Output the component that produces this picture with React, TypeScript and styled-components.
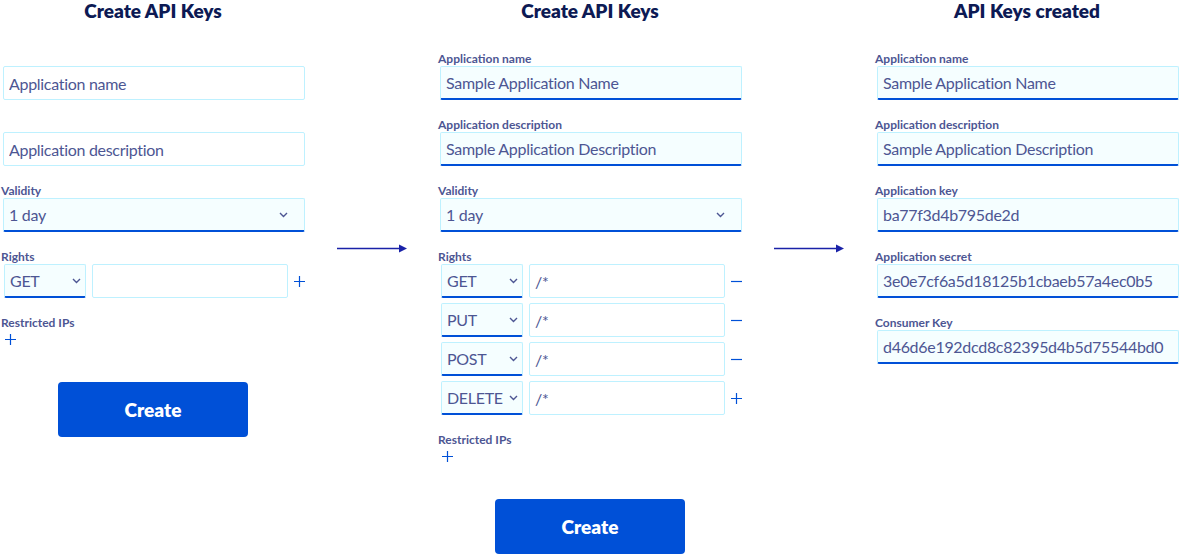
import React from "react";
import styled, { createGlobalStyle } from "styled-components";

const Global = createGlobalStyle`
  html, body { margin: 0; padding: 0; background: #ffffff; }
  body { font-family: Lato, "Liberation Sans", sans-serif; }
  * { box-sizing: border-box; }
`;

const TEXT = "#4d5693";
const BLUE = "#0050d7";
const BORDER = "#bef1ff";
const FILL = "#f5feff";

const Page = styled.div`
  display: flex;
  align-items: flex-start;
  padding-left: 1px;
  width: 1180px;
  height: 555px;
  overflow: hidden;
`;

const Column = styled.section`
  width: 304px;
  display: flex;
  flex-direction: column;
  flex-shrink: 0;
`;

const Title = styled.h2`
  margin: 0;
  height: 52px;
  font-size: 19px;
  line-height: 22px;
  font-weight: 800;
  text-align: center;
  color: #0d1a54;
`;

const Field = styled.div`
  display: flex;
  flex-direction: column;
  margin-bottom: 18px;
`;

const Label = styled.label`
  display: block;
  height: 14px;
  font-size: 12px;
  line-height: 14px;
  font-weight: 700;
  color: ${TEXT};
  white-space: nowrap;
`;

const TextInput = styled.input<{ $filled?: boolean }>`
  display: block;
  width: 302px;
  height: 34px;
  margin: 0 0 0 2px;
  padding: 0 5px;
  border: 1px solid ${BORDER};
  border-bottom: ${(p) => (p.$filled ? `2px solid ${BLUE}` : `1px solid ${BORDER}`)};
  border-radius: 2px;
  background: ${(p) => (p.$filled ? FILL : "#ffffff")};
  font-family: inherit;
  font-size: 16px;
  letter-spacing: -0.3px;
  color: ${TEXT};
  outline: none;
  &::placeholder { color: ${TEXT}; opacity: 1; }
`;

const SelectBox = styled.div<{ $width: number; $offset: number; $padRight: number }>`
  display: flex;
  align-items: center;
  justify-content: space-between;
  width: ${(p) => p.$width}px;
  height: 34px;
  margin-left: ${(p) => p.$offset}px;
  padding: 0 ${(p) => p.$padRight}px 0 5px;
  border: 1px solid ${BORDER};
  border-bottom: 2px solid ${BLUE};
  border-radius: 2px;
  background: ${FILL};
  font-size: 16px;
  letter-spacing: -0.3px;
  color: ${TEXT};
  flex-shrink: 0;
  white-space: nowrap;
`;

const RightsList = styled.div`
  display: flex;
  flex-direction: column;
  gap: 5px;
  margin-bottom: 18px;
`;

const RightsRow = styled.div`
  display: flex;
  align-items: center;
  height: 34px;
`;

const PathInput = styled(TextInput)`
  width: 196px;
  margin-left: 6px;
  flex-shrink: 0;
`;

const IconButton = styled.button<{ $offset: number }>`
  display: flex;
  align-items: center;
  justify-content: center;
  width: 11px;
  height: 18px;
  margin-left: ${(p) => p.$offset}px;
  padding: 0;
  border: none;
  background: transparent;
  color: ${BLUE};
  cursor: pointer;
`;

const CreateButton = styled.button`
  display: block;
  width: 190px;
  height: 55px;
  margin: 34px auto 0;
  border: none;
  border-radius: 4px;
  background: ${BLUE};
  color: #ffffff;
  font-family: inherit;
  font-size: 19px;
  font-weight: 800;
  cursor: pointer;
`;

const ArrowCell = styled.div<{ $width: number }>`
  width: ${(p) => p.$width}px;
  display: flex;
  justify-content: center;
  padding-top: 244px;
  flex-shrink: 0;
`;

const Chevron = () => (
  <svg width="9" height="6" viewBox="0 0 9 6" fill="none">
    <path d="M1 1l3.5 3.5L8 1" stroke={TEXT} strokeWidth="1.4" />
  </svg>
);

const Plus = () => (
  <svg width="11" height="11" viewBox="0 0 11 11">
    <path d="M0 5.5h11M5.5 0v11" stroke={BLUE} strokeWidth="1.2" />
  </svg>
);

const Minus = () => (
  <svg width="11" height="11" viewBox="0 0 11 11">
    <path d="M0 5.5h11" stroke={BLUE} strokeWidth="1.2" />
  </svg>
);

const Arrow = () => (
  <svg width="70" height="9" viewBox="0 0 70 9">
    <path d="M0 4.5h63" stroke="#1a22a8" strokeWidth="1.3" />
    <path d="M62 0.5L70 4.5L62 8.5Z" fill="#1a22a8" />
  </svg>
);

type Right = { method: string; path: string; last?: boolean };

const Rights = ({ rows }: { rows: Right[] }) => (
  <>
    <Label>Rights</Label>
    <RightsList>
      {rows.map((r, i) => (
        <RightsRow key={i}>
          <SelectBox $width={82} $offset={3} $padRight={4}>
            <span>{r.method}</span>
            <Chevron />
          </SelectBox>
          <PathInput defaultValue={r.path} />
          <IconButton $offset={6}>{r.last ? <Plus /> : <Minus />}</IconButton>
        </RightsRow>
      ))}
    </RightsList>
  </>
);

const Restricted = () => (
  <>
    <Label>Restricted IPs</Label>
    <IconButton $offset={4}>
      <Plus />
    </IconButton>
    <CreateButton>Create</CreateButton>
  </>
);

const Validity = () => (
  <Field>
    <Label>Validity</Label>
    <SelectBox $width={302} $offset={2} $padRight={16}>
      <span>1 day</span>
      <Chevron />
    </SelectBox>
  </Field>
);

export default function App() {
  return (
    <>
      <Global />
      <Page>
        <Column>
          <Title>Create API Keys</Title>
          <Field>
            <Label />
            <TextInput placeholder="Application name" />
          </Field>
          <Field>
            <Label />
            <TextInput placeholder="Application description" />
          </Field>
          <Validity />
          <Rights rows={[{ method: "GET", path: "", last: true }]} />
          <Restricted />
        </Column>

        <ArrowCell $width={133}>
          <Arrow />
        </ArrowCell>

        <Column>
          <Title>Create API Keys</Title>
          <Field>
            <Label>Application name</Label>
            <TextInput $filled defaultValue="Sample Application Name" />
          </Field>
          <Field>
            <Label>Application description</Label>
            <TextInput $filled defaultValue="Sample Application Description" />
          </Field>
          <Validity />
          <Rights
            rows={[
              { method: "GET", path: "/*" },
              { method: "PUT", path: "/*" },
              { method: "POST", path: "/*" },
              { method: "DELETE", path: "/*", last: true },
            ]}
          />
          <Restricted />
        </Column>

        <ArrowCell $width={133}>
          <Arrow />
        </ArrowCell>

        <Column>
          <Title>API Keys created</Title>
          {[
            ["Application name", "Sample Application Name"],
            ["Application description", "Sample Application Description"],
            ["Application key", "ba77f3d4b795de2d"],
            ["Application secret", "3e0e7cf6a5d18125b1cbaeb57a4ec0b5"],
            ["Consumer Key", "d46d6e192dcd8c82395d4b5d75544bd0"],
          ].map(([l, v]) => (
            <Field key={l}>
              <Label>{l}</Label>
              <TextInput $filled readOnly defaultValue={v} />
            </Field>
          ))}
        </Column>
      </Page>
    </>
  );
}
